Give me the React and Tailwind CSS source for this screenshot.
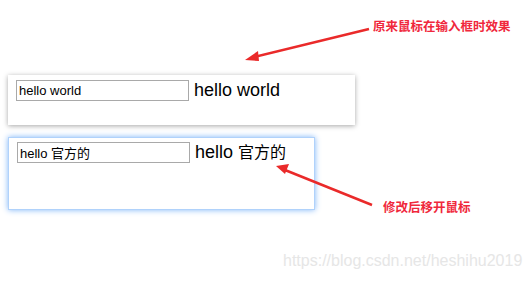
import React from 'react';

// Annotated screenshot: two text boxes, red arrows with notes, and a faint watermark
const App = () => {
  return (
    <div className="relative w-[530px] h-[291px] bg-white overflow-hidden font-['Liberation_Sans','Noto_Sans_CJK_SC',sans-serif]">
      <div className="pt-[75px] pl-2">
        {/* Normal box */}
        <div className="w-[347px] h-[50px] bg-white shadow-[0_1px_5px_rgba(0,0,0,0.35)] flex items-start pt-[5px] pl-2">
          <input
            readOnly
            value="hello world"
            className="w-[173px] h-[21px] border border-[#a9a9a9] px-[2px] text-[13px] text-black outline-none"
          />
          <span className="ml-[5px] text-[18px] leading-[20px] text-black">hello world</span>
        </div>

        {/* Focused-looking box */}
        <div className="mt-3 w-[307px] h-[73px] bg-white border border-[#b0d2fb] shadow-[0_0_6px_#80b6f8] flex items-start pt-1 pl-2">
          <input
            readOnly
            value="hello 官方的"
            className="w-[173px] h-[21px] border border-[#a9a9a9] px-[2px] text-[13px] text-black outline-none"
          />
          <span className="ml-[5px] text-[18px] leading-[20px] text-black">
            hello <span className="text-[16px]">官方的</span>
          </span>
        </div>
      </div>

      {/* Arrows */}
      <svg className="absolute inset-0" width="530" height="291">
        <line x1="369" y1="29" x2="254" y2="57" stroke="#ea2a2a" strokeWidth="2.5" />
        <polygon points="245,60 258,51 259,61" fill="#ea2a2a" />
        <line x1="372" y1="205" x2="285" y2="170" stroke="#ea2a2a" strokeWidth="2.5" />
        <polygon points="276,166 289,164 285,174" fill="#ea2a2a" />
      </svg>

      {/* Notes */}
      <div className="absolute left-[373px] top-[19px] text-[12.5px] font-bold text-[#f0283c] leading-[16px]">
        原来鼠标在输入框时效果
      </div>
      <div className="absolute left-[383px] top-[200px] text-[12.5px] font-bold text-[#f0283c] leading-[16px]">
        修改后移开鼠标
      </div>

      {/* Watermark */}
      <div className="absolute left-[283px] top-[252px] text-[16px] text-[#e6e6e6] leading-[18px]">
        https://blog.csdn.net/heshihu2019
      </div>
    </div>
  );
};

export default App;
